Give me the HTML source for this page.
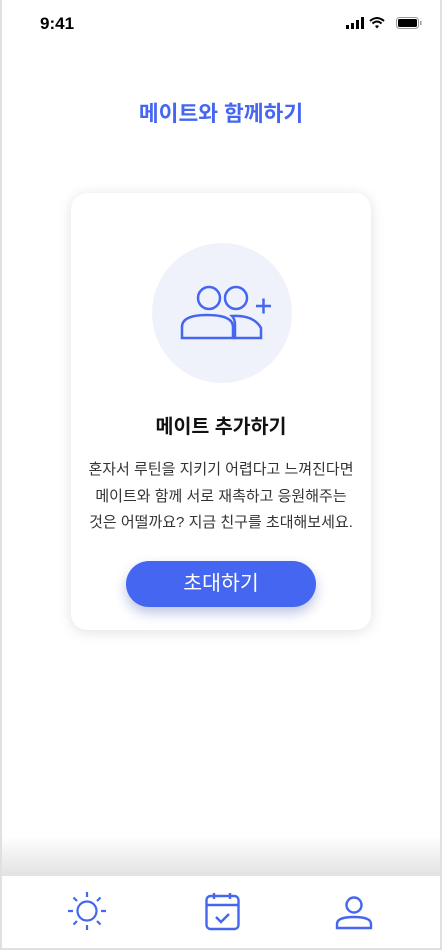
<!DOCTYPE html>
<html><head><meta charset="utf-8"><style>
*{margin:0;padding:0;box-sizing:border-box}
body{width:442px;height:950px;background:#e0e0e0;font-family:"Liberation Sans","Noto Sans CJK KR",sans-serif;position:relative;overflow:hidden}
.frame{position:absolute;left:2px;top:0;width:438px;height:948px;background:#fff;overflow:hidden}
.time{position:absolute;left:38px;top:14px;font-size:17px;font-weight:bold;color:#000}
.title{position:absolute;left:0;width:438px;top:97px;text-align:center;font-size:21.5px;font-weight:bold;color:#4466f0}
.card{position:absolute;left:69px;top:193px;width:300px;height:437px;border-radius:16px;background:#fff;box-shadow:0 2px 14px rgba(0,0,0,0.12)}
.circ{position:absolute;left:81px;top:50px;width:140px;height:140px;border-radius:50%;background:#eff2fb}
.h{position:absolute;left:0;width:300px;top:217px;text-align:center;font-size:19.5px;font-weight:bold;color:#111}
.p{position:absolute;left:0;width:300px;top:264px;text-align:center;font-size:15px;line-height:26.5px;color:#333}
.btn{position:absolute;left:55px;top:368px;width:190px;height:46px;border-radius:23px;background:#4466f0;color:#fff;font-size:20.5px;text-align:center;line-height:46px;box-shadow:0 6px 12px rgba(40,60,160,0.3)}
.nav{position:absolute;left:0;top:876px;width:438px;height:72px;background:#fff}
.shade{position:absolute;left:0;top:836px;width:438px;height:40px;background:linear-gradient(#fff,#e2e2e2)}
</style></head><body><div class="frame">
<div class="time">9:41</div>
<svg style="position:absolute;left:344px;top:16px" width="80" height="16" viewBox="0 0 80 16">
<rect x="0" y="9" width="3" height="4" fill="#000"/><rect x="5" y="7" width="3" height="6" fill="#000"/><rect x="10" y="4" width="3" height="9" fill="#000"/><rect x="15" y="1" width="3" height="12" fill="#000"/>
<path d="M24 5 Q31 -1 38 5 M26.5 7.5 Q31 3.5 35.5 7.5" stroke="#000" stroke-width="2" fill="none"/><path d="M29 10 L31 12.5 L33 10 Q31 8.5 29 10Z" fill="#000"/>
<rect x="50.5" y="1.5" width="22" height="11" rx="3" stroke="#999" fill="none"/><rect x="52" y="3" width="19" height="8" rx="1.5" fill="#000"/><rect x="74" y="5" width="1.5" height="4" fill="#999"/>
</svg>
<div class="title">메이트와 함께하기</div>
<div class="card">
<div class="circ"></div>
<svg style="position:absolute;left:81px;top:50px" width="140" height="140" viewBox="0 0 140 140" fill="none" stroke="#4466f0" stroke-width="2.5">
<circle cx="57" cy="55" r="11"/><circle cx="84" cy="55" r="11"/>
<path d="M30 95 V84 Q30 72 55 72 Q81 72 81 84 V95 Z"/>
<path d="M83 95 V82 Q83 76 80 73 Q102 72 109 85 V95 Z"/>
<path d="M104 63 H119 M111.5 55.5 V70.5"/>
</svg>
<div class="h">메이트 추가하기</div>
<div class="p">혼자서 루틴을 지키기 어렵다고 느껴진다면<br>메이트와 함께 서로 재촉하고 응원해주는<br>것은 어떨까요? 지금 친구를 초대해보세요.</div>
<div class="btn">초대하기</div>
</div>
<div class="shade"></div>
<div class="nav"></div>
<svg style="position:absolute;left:63px;top:890px" width="44" height="44" viewBox="0 0 44 44" fill="none" stroke="#4466f0" stroke-width="2.2">
<circle cx="22" cy="21" r="9.5"/><path d="M22 2v5M22 35v5M3 21h5M36 21h5M8.5 7.5l3.5 3.5M32 31l3.5 3.5M8.5 34.5l3.5-3.5M32 11l3.5-3.5"/>
</svg>
<svg style="position:absolute;left:200px;top:890px" width="40" height="44" viewBox="0 0 40 44" fill="none" stroke="#4466f0" stroke-width="2.4">
<rect x="4.5" y="6" width="32" height="33" rx="4"/><path d="M4.5 15H36.5M12 3v6M28 3v6M14 27l5 5 8-8"/>
</svg>
<svg style="position:absolute;left:330px;top:890px" width="44" height="44" viewBox="0 0 44 44" fill="none" stroke="#4466f0" stroke-width="2.4">
<circle cx="22" cy="15" r="7.5"/><path d="M5 38 V34 Q5 27 22 27 Q39 27 39 34 V38 Z"/>
</svg>
</div></body></html>
